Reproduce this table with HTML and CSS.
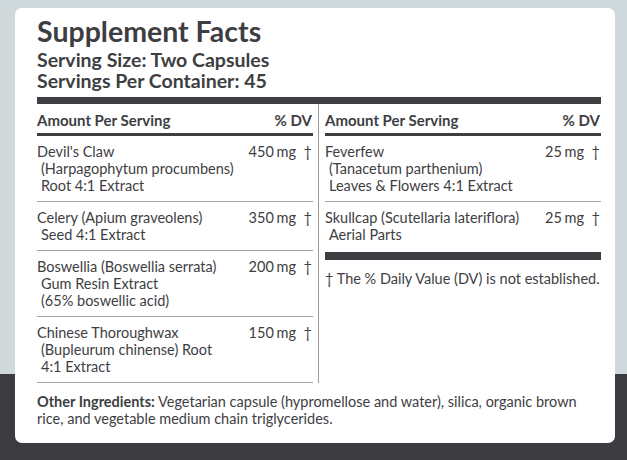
FILE: index.html
```html
<!DOCTYPE html>
<html>
<head>
<meta charset="utf-8">
<link rel="stylesheet" href="styles.css">
</head>
<body>
<div class="card">
  <h1 class="title">Supplement Facts</h1>
  <p class="sub">Serving Size: Two Capsules</p>
  <p class="sub">Servings Per Container: 45</p>
  <div class="bar"></div>
  <div class="cols">
    <div class="col">
      <div class="hd"><span>Amount Per Serving</span><span>% DV</span></div>
      <div class="row"><div class="name">Devil's Claw<br>(Harpagophytum procumbens)<br>Root 4:1 Extract</div><div class="amt">450 mg</div><div class="dag">†</div></div>
      <div class="row"><div class="name">Celery (Apium graveolens)<br>Seed 4:1 Extract</div><div class="amt">350 mg</div><div class="dag">†</div></div>
      <div class="row"><div class="name">Boswellia (Boswellia serrata)<br>Gum Resin Extract<br>(65% boswellic acid)</div><div class="amt">200 mg</div><div class="dag">†</div></div>
      <div class="row"><div class="name">Chinese Thoroughwax<br>(Bupleurum chinense) Root<br>4:1 Extract</div><div class="amt">150 mg</div><div class="dag">†</div></div>
    </div>
    <div class="col col-right">
      <div class="hd"><span>Amount Per Serving</span><span>% DV</span></div>
      <div class="row"><div class="name">Feverfew<br>(Tanacetum parthenium)<br>Leaves &amp; Flowers 4:1 Extract</div><div class="amt">25 mg</div><div class="dag">†</div></div>
      <div class="row row-last"><div class="name">Skullcap (Scutellaria lateriflora)<br>Aerial Parts</div><div class="amt">25 mg</div><div class="dag">†</div></div>
      <div class="bar bar-thick"></div>
      <p class="note">† The % Daily Value (DV) is not established.</p>
    </div>
  </div>
  <p class="other"><b class="lbl">Other Ingredients:</b> Vegetarian capsule (hypromellose and water), silica, organic brown rice, and vegetable medium chain triglycerides.</p>
</div>
</body>
</html>
```
FILE: styles.css
```css
html, body {
  margin: 0;
  padding: 0;
}
body {
  width: 627px;
  height: 460px;
  overflow: hidden;
  background: linear-gradient(to bottom, #cfd8da 0, #cfd8da 374px, #3c3c40 374px, #3c3c40 100%);
  font-family: Lato, "Open Sans", sans-serif;
  color: #3e3e42;
}
.card {
  box-sizing: border-box;
  margin: 8px 0 0 15px;
  width: 600px;
  height: 435px;
  background: #fff;
  border-radius: 7px;
  padding: 8px 14px 0 22px;
}
.title {
  margin: 0;
  font-size: 28.5px;
  line-height: 30px;
  font-weight: 700;
}
.sub {
  margin: 0;
  font-size: 19.5px;
  line-height: 21px;
  font-weight: 700;
}
.title + .sub {
  margin-top: 3px;
}
.bar {
  height: 7px;
  background: #3e3e42;
  margin-top: 6px;
}
.cols {
  display: flex;
  align-items: stretch;
  padding-bottom: 5px;
}
.col {
  width: 276px;
  box-sizing: border-box;
}
.col-right {
  width: 283px;
  margin-left: 5px;
  padding-left: 6px;
  border-left: 1px solid #9a9a9a;
}
.hd {
  display: flex;
  justify-content: space-between;
  font-weight: 700;
  font-size: 15px;
  line-height: 17px;
  padding: 8px 1px 4px 0;
  border-bottom: 3px solid #3e3e42;
}
.row {
  display: flex;
  align-items: flex-start;
  font-size: 14.5px;
  line-height: 17px;
  padding: 7px 0;
  border-bottom: 1px solid #a5a5a5;
}
.row-last {
  border-bottom: none;
  padding-bottom: 9px;
}
.name {
  flex: 1;
  white-space: nowrap;
  padding-left: 4px;
  text-indent: -4px;
}
.amt {
  white-space: nowrap;
  word-spacing: -1px;
}
.dag {
  width: 16px;
  text-align: right;
  padding-right: 1px;
}
.bar-thick {
  height: 8px;
  margin-top: 0;
}
.note {
  margin: 0;
  padding-top: 10px;
  font-size: 14.5px;
  line-height: 17px;
}
.other {
  margin: 5px 0 0;
  font-size: 14.5px;
  line-height: 17px;
}
.lbl {
  font-weight: 700;
}
```
